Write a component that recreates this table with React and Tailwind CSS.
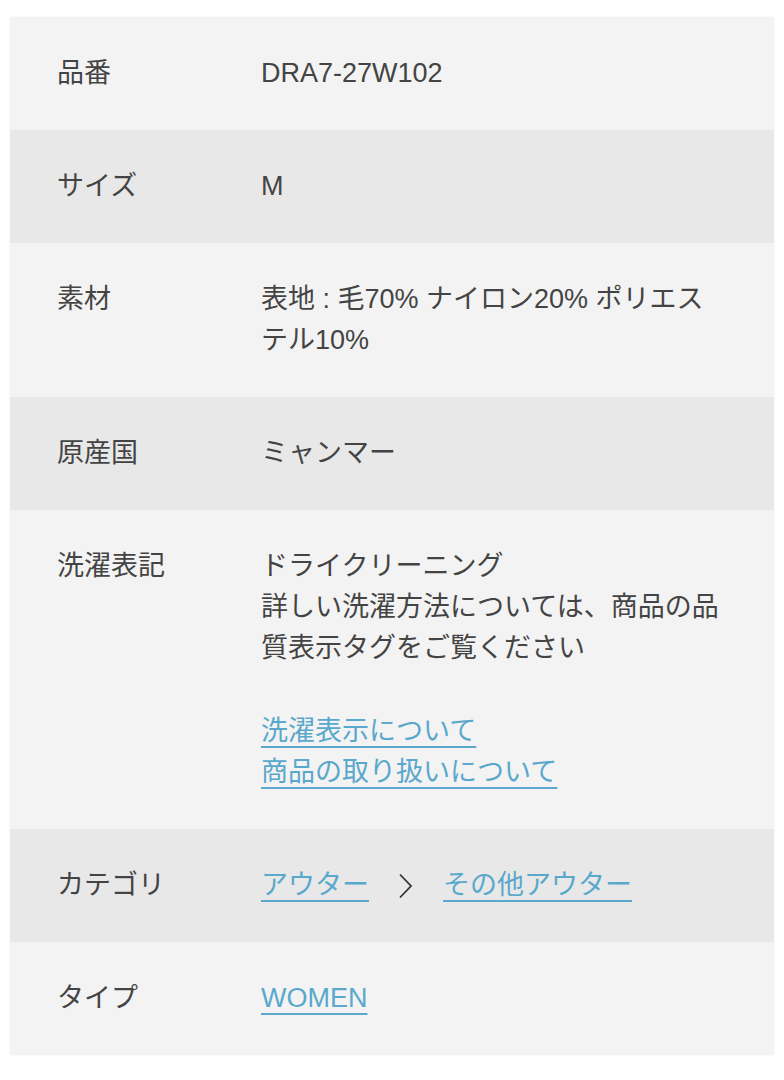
const font = { fontFamily: '"Liberation Sans", "Noto Sans CJK JP", sans-serif' }

function Row({ label, dark, children }) {
  return (
    <div className={`flex py-[36px] ${dark ? 'bg-[#e8e8e8]' : 'bg-[#f3f3f3]'}`}>
      <div className="w-[251px] shrink-0 pl-[47px] text-[#444]">{label}</div>
      <div className="w-[462px] text-[#444]">{children}</div>
    </div>
  )
}

function Link({ children }) {
  return (
    <a href="#" className="text-[#5aa8cc] underline decoration-[2px] underline-offset-[6px]">{children}</a>
  )
}

export default function App() {
  return (
    <div className="min-h-screen bg-white pt-[17px] px-[10px]" style={font}>
      <div className="text-[27px] leading-[41px] shadow-[0_0_2px_rgba(0,0,0,0.06)]">
        <Row label="品番">DRA7-27W102</Row>
        <Row label="サイズ" dark>M</Row>
        <Row label="素材">表地 : 毛70% ナイロン20% ポリエステル10%</Row>
        <Row label="原産国" dark>ミャンマー</Row>
        <Row label="洗濯表記">
          <p>ドライクリーニング</p>
          <p>詳しい洗濯方法については、商品の品質表示タグをご覧ください</p>
          <div className="mt-[42px] flex flex-col items-start">
            <Link>洗濯表示について</Link>
            <Link>商品の取り扱いについて</Link>
          </div>
        </Row>
        <Row label="カテゴリ" dark>
          <div className="flex items-center">
            <Link>アウター</Link>
            <svg className="mx-[29px]" width="16" height="26" viewBox="0 0 16 26" fill="none">
              <path d="M2 1.5 L13 13 L2 24.5" stroke="#333" strokeWidth="1.8" />
            </svg>
            <Link>その他アウター</Link>
          </div>
        </Row>
        <Row label="タイプ">
          <Link>WOMEN</Link>
        </Row>
      </div>
    </div>
  )
}
